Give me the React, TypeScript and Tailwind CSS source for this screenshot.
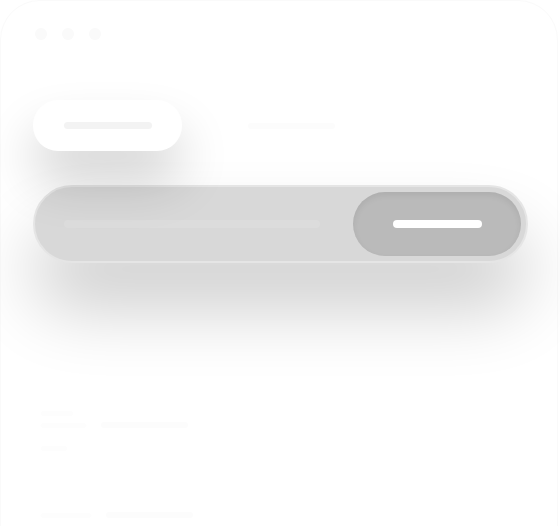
import React from "react";

export default function App() {
  return (
    <div className="w-[560px] h-[526px] bg-white overflow-hidden" style={{ fontFamily: "Inter, sans-serif" }}>
      <div className="w-[558px] h-[600px] rounded-t-[40px] border border-[#fafafa] px-[32px] pt-[27px]">
        <div className="flex gap-[15px] pl-[2px]">
          <div className="w-3 h-3 rounded-full bg-[#fafafa]" />
          <div className="w-3 h-3 rounded-full bg-[#fafafa]" />
          <div className="w-3 h-3 rounded-full bg-[#fafafa]" />
        </div>
        <div className="mt-[60px] flex items-center">
          <div className="relative z-10 w-[149px] h-[51px] rounded-[25px] bg-white shadow-[0_30px_50px_rgba(0,0,0,0.18)] flex items-center justify-center">
            <div className="w-[88px] h-[7px] rounded-sm bg-[#f3f3f3]" />
          </div>
          <div className="ml-[66px] w-[87px] h-[6px] rounded-sm bg-[#fcfcfc]" />
        </div>
        <div className="mt-[34px] w-[495px] h-[78px] rounded-full bg-[#d8d8d8] border-2 border-[#e5e5e5] shadow-[0_45px_70px_rgba(0,0,0,0.2)] flex items-center pl-[29px] pr-[5px]">
          <div className="w-[256px] h-[8px] rounded-sm bg-[#dcdcdc]" />
          <div className="ml-auto w-[168px] h-[64px] rounded-full bg-[#bababa] shadow-[inset_0_3px_6px_rgba(0,0,0,0.07)] flex items-center justify-center">
            <div className="w-[89px] h-[8px] rounded-sm bg-white" />
          </div>
        </div>
        <div className="mt-[148px] flex flex-col gap-[6px] pl-[8px]">
          <div className="w-[32px] h-[5px] rounded-sm bg-[#fdfdfd]" />
          <div className="flex items-center gap-[15px]">
            <div className="w-[45px] h-[5px] rounded-sm bg-[#fdfdfd]" />
            <div className="w-[87px] h-[6px] rounded-sm bg-[#fcfcfc]" />
          </div>
          <div className="mt-[12px] w-[26px] h-[5px] rounded-sm bg-[#fdfdfd]" />
          <div className="mt-[55px] flex items-center gap-[15px]">
            <div className="w-[50px] h-[5px] rounded-sm bg-[#fdfdfd]" />
            <div className="w-[87px] h-[6px] rounded-sm bg-[#fcfcfc]" />
          </div>
        </div>
      </div>
    </div>
  );
}
